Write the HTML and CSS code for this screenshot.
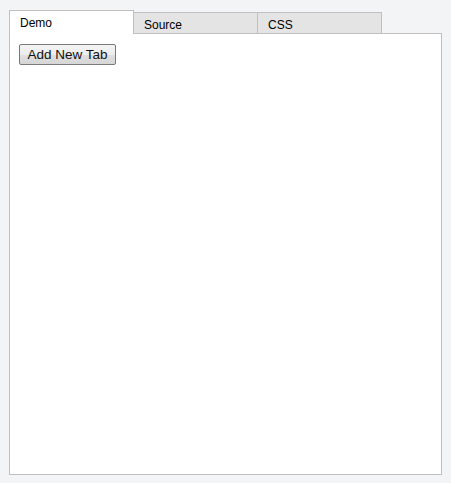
FILE: index.html
```html
<!DOCTYPE html>
<html>
<head>
<meta charset="utf-8">
<link rel="stylesheet" href="styles.css">
</head>
<body>
<div class="tabs">
  <div class="tab active">Demo</div>
  <div class="tab">Source</div>
  <div class="tab">CSS</div>
</div>
<div class="panel">
  <button class="btn" type="button">Add New Tab</button>
</div>
</body>
</html>
```

FILE: styles.css
```css
html, body {
  margin: 0;
  background: #f3f4f6;
}
body {
  padding: 10px 9px 8px 9px;
  font-family: "Liberation Sans", Arial, sans-serif;
}
.tabs {
  display: flex;
  align-items: flex-end;
}
.tab {
  position: relative;
  height: 14px;
  line-height: 14px;
  font-size: 12px;
  color: #000;
  padding: 5px 0 1px 10px;
  box-sizing: content-box;
  width: 113px;
  border: 1px solid #c0c0c0;
  border-bottom: none;
  background: #e4e4e4;
  margin-left: -1px;
}
.tab:first-child {
  margin-left: 0;
}
.tab.active {
  background: #fff;
  padding-bottom: 4px;
  margin-bottom: -1px;
  z-index: 1;
}
.panel {
  border: 1px solid #c0c0c0;
  background: #fff;
  padding: 10px 9px;
  box-sizing: border-box;
  height: 442px;
}
.btn {
  display: block;
  height: 21px;
  width: 97px;
  padding: 0;
  font-family: "Liberation Sans", Arial, sans-serif;
  font-size: 13.5px;
  color: #111;
  border: 1px solid #7a7a7a;
  border-radius: 2px;
  background: linear-gradient(#f4f4f4 0%, #ececec 50%, #e0e0e0 51%, #d6d6d6 100%);
}
```
